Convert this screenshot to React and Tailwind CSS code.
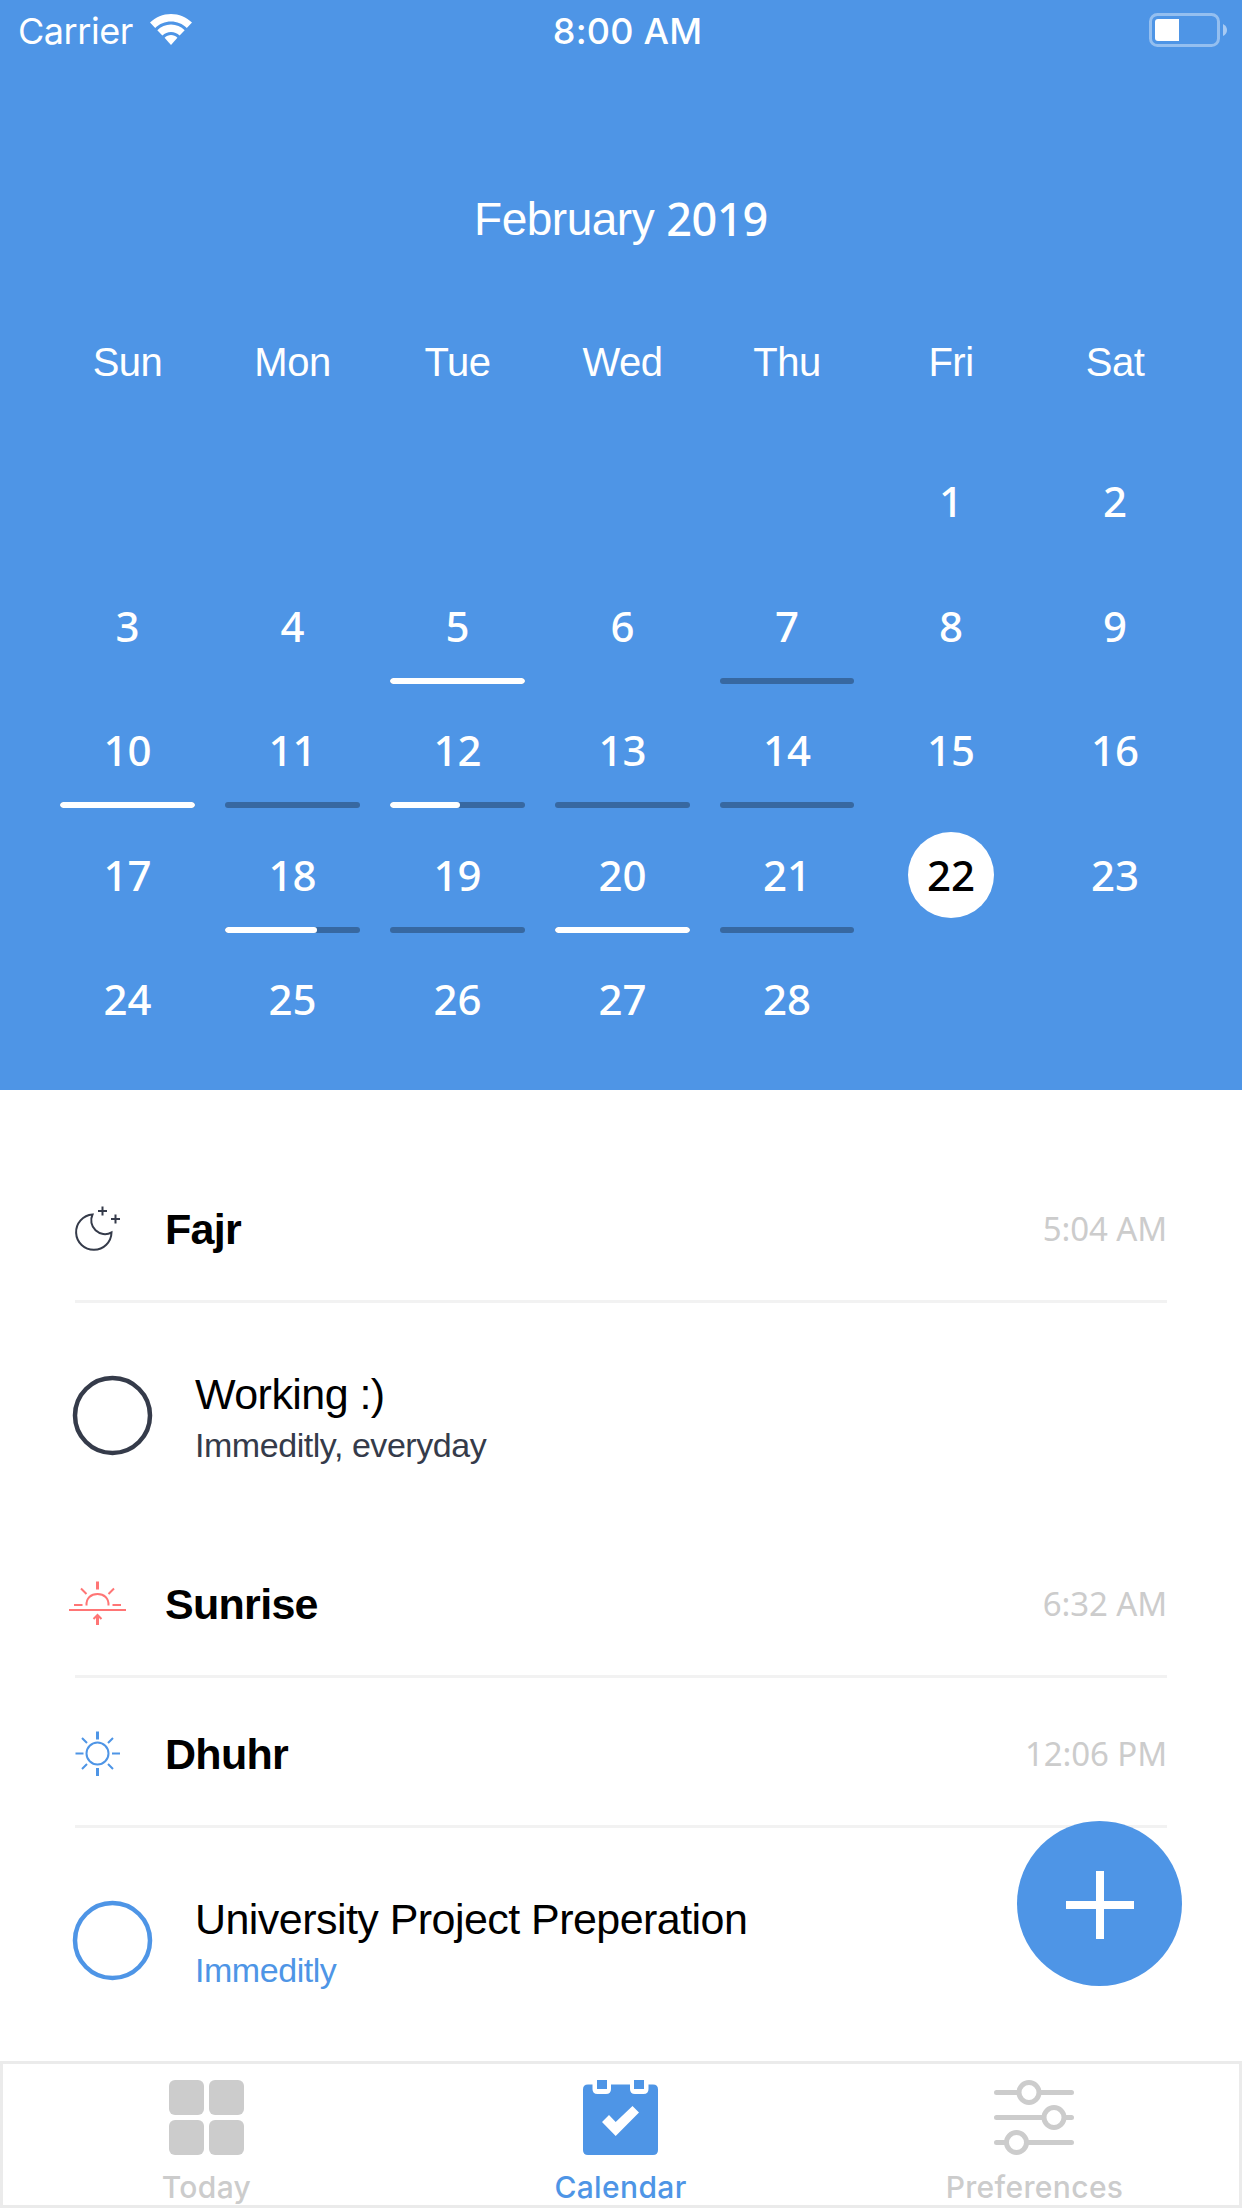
const sans = "font-['Liberation_Sans',Arial,sans-serif]";
const noto = "font-['Noto_Sans','Open_Sans',sans-serif]";
const inter = "font-['Inter',sans-serif]";

const weekdays = ["Sun", "Mon", "Tue", "Wed", "Thu", "Fri", "Sat"];
const progress = { 5: 100, 7: 0, 10: 100, 11: 0, 12: 52, 13: 0, 14: 0, 18: 68, 19: 0, 20: 100, 21: 0 };
const selectedDay = 22;
const cells = Array.from({ length: 35 }, (_, i) => (i >= 5 && i - 4 <= 28 ? i - 4 : null));

function StatusBar() {
  return (
    <div className={`flex h-[60px] items-center justify-between pl-[18px] pr-[14px] text-4xl leading-none ${inter}`}>
      <div className="flex w-[240px] items-center gap-[17px] pt-[2px]">
        <span className="tracking-[-0.45px]">Carrier</span>
        <svg className="-mt-[3px]" width="42" height="31" viewBox="0 0 42 31" fill="#fff">
          <path d="M21 0C13 0 5.500 3.100 0 8.600L5.200 13.900C9.400 9.700 15 7.400 21 7.400S32.600 9.700 36.800 13.900L42 8.600C36.500 3.100 29 0 21 0Z" />
          <path d="M21 10.500C15.800 10.500 10.900 12.600 7.300 16.200L12.400 21.400C14.700 19.100 17.700 17.900 21 17.900S27.300 19.100 29.600 21.400L34.700 16.200C31.100 12.600 26.200 10.500 21 10.500Z" />
          <path d="M21 21C18.600 21 16.300 22 14.600 23.700L21 31L27.400 23.700C25.700 22 23.400 21 21 21Z" />
        </svg>
      </div>
      <span className="pt-[2px] font-medium tracking-[0.2px]">8:00 AM</span>
      <div className="flex w-[231px] justify-end">
        <svg width="79" height="34" viewBox="0 0 79 34">
          <rect x="1.500" y="1.500" width="68" height="31" rx="7" fill="none" stroke="#fff" strokeOpacity=".4" strokeWidth="3" />
          <path d="M9 6H30V28H9Q6 28 6 25V9Q6 6 9 6Z" fill="#fff" />
          <path d="M74 11Q78 13 78 17T74 23Z" fill="#fff" fillOpacity=".5" />
        </svg>
      </div>
    </div>
  );
}

function DayCell({ day }) {
  if (!day) return <div />;
  const value = progress[day];
  return (
    <div className="flex flex-col items-center px-[15px]">
      <div
        className={
          day === selectedDay
            ? "flex h-[86px] w-[86px] items-center justify-center rounded-full bg-white text-black"
            : "flex h-[86px] w-[86px] items-center justify-center"
        }
      >
        {day}
      </div>
      {value !== undefined && (
        <div className="mt-[9px] h-[6px] w-full overflow-hidden rounded-full bg-[#3768a1]">
          <div className="h-full rounded-full bg-white" style={{ width: `${value}%` }} />
        </div>
      )}
    </div>
  );
}

function Calendar() {
  return (
    <div className="px-[45px]">
      <h1 className={`mt-[126px] flex h-[64px] items-center justify-center gap-[12px] text-[46px] leading-none ${sans}`}>
        <span className="pt-[2px] tracking-[-0.5px]">February</span>
        <span className={`text-[45px] font-medium tracking-[-0.3px] ${noto}`}>2019</span>
      </h1>
      <div className={`mt-[85px] grid h-[54px] grid-cols-[165px_165px_165px_165px_164px_164px_164px] items-center text-center text-[40px] leading-none tracking-[-0.5px] ${sans}`}>
        {weekdays.map((d) => (
          <span key={d}>{d}</span>
        ))}
      </div>
      <div className={`mt-[69px] grid auto-rows-[124.500px] grid-cols-[165px_165px_165px_165px_164px_164px_164px] text-[42px] font-medium leading-none ${noto}`}>
        {cells.map((d, i) => (
          <DayCell key={i} day={d} />
        ))}
      </div>
    </div>
  );
}

function MoonIcon() {
  return (
    <svg width="57" height="48" viewBox="0 0 57 48" fill="none" stroke="#353b4a" strokeWidth="2">
      <path d="M23.500 10.500A17.700 17.700 0 1 0 42.500 28.500A13.800 13.800 0 0 1 23.500 10.500Z" />
      <path d="M33.500 2.500v9M29 7h9M46.500 10.500v9M42 15h9" />
    </svg>
  );
}

function SunriseIcon() {
  return (
    <svg width="57" height="48" viewBox="0 0 57 48" fill="none" stroke="#ff7575" strokeWidth="2">
      <path d="M0 31H57" />
      <path d="M17.500 26.500C17 19 22 15 28.500 15S40 19 39.500 26.500M5 26h8.500M43.500 26H52M12 9.500l5.500 5.500M45 9.500L39.500 15M24.500 40l4-4 4 4" />
      <path d="M28.500 2.500v8M28.500 36.500v9.500" strokeWidth="3" />
    </svg>
  );
}

function SunIcon() {
  return (
    <svg width="57" height="48" viewBox="0 0 57 48" fill="none" stroke="#4e95e6" strokeWidth="2">
      <circle cx="28.500" cy="24.500" r="11" />
      <path d="M6.500 24.500h8M43 24.500h8M13 9l5 5M44 9l-5 5M13 40l5-5M44 40l-5-5" />
      <path d="M28.500 2.500v8M28.500 39v8" strokeWidth="3" />
    </svg>
  );
}

function PrayerHeader({ icon, name, time }) {
  return (
    <div className="mx-[75px] flex h-[150px] items-center border-b-[3px] border-[#f2f2f2] pt-[5px]">
      <div className="-ml-[6px] -mt-[3px] h-[48px] w-[57px] shrink-0">{icon}</div>
      <h2 className={`ml-[39px] flex-1 text-[43px] font-bold leading-none tracking-[-0.7px] ${sans}`}>{name}</h2>
      <span className={`-mt-px text-[33px] leading-none tracking-[-0.1px] text-[#ccc] ${noto}`}>{time}</span>
    </div>
  );
}

function Task({ title, note, color }) {
  return (
    <div className={`flex h-[225px] items-center pl-[72px] ${sans}`}>
      <svg className={`-mt-px shrink-0 ${color}`} width="81" height="81" viewBox="0 0 81 81" fill="none" stroke="currentColor" strokeWidth="4.500">
        <circle cx="40.500" cy="40.500" r="37.500" />
      </svg>
      <div className="ml-[42px] pt-[5px]">
        <div className="text-[43px] leading-[54px] tracking-[-0.55px]">{title}</div>
        <div className={`text-[34px] leading-[48px] tracking-[-0.45px] ${color}`}>{note}</div>
      </div>
    </div>
  );
}

function TodayIcon() {
  return (
    <div className="grid h-[75px] w-[75px] grid-cols-2 gap-[5px]">
      <span className="rounded-md bg-[#ccc]" />
      <span className="rounded-md bg-[#ccc]" />
      <span className="rounded-md bg-[#ccc]" />
      <span className="rounded-md bg-[#ccc]" />
    </div>
  );
}

function CalendarIcon() {
  return (
    <svg width="75" height="75" viewBox="0 0 75 75" fill="#4e95e6">
      <path d="M5 4.500H9.500V9Q9.500 14 14.500 14H23Q28 14 28 9V4.500H47V9Q47 14 52 14H60.500Q65.500 14 65.500 9V4.500H70Q75 4.500 75 9.500V70Q75 75 70 75H5Q0 75 0 70V9.500Q0 4.500 5 4.500Z" />
      <path d="M14 0h10v9H14zM51 0h10v9H51z" />
      <path d="M19 42L26 35L32.700 42L49.500 26L56 32.500L32.700 56Z" fill="#fff" />
    </svg>
  );
}

function PreferencesIcon() {
  return (
    <svg className="-ml-px" width="80" height="75" viewBox="0 0 80 75" fill="#fff" stroke="#ccc" strokeWidth="5" strokeLinecap="round">
      <path d="M2.500 12.500h75M2.500 37.500h75M2.500 62.500h75" />
      <circle cx="35" cy="12.500" r="10" />
      <circle cx="60" cy="37.500" r="10" />
      <circle cx="22.500" cy="62.500" r="10" />
    </svg>
  );
}

function Tab({ icon, label, color }) {
  return (
    <div className={`flex w-[414px] shrink-0 flex-col items-center pt-[16px] pr-px text-[30px] font-medium leading-none ${inter} ${color}`}>
      {icon}
      <span className="mt-[17px] tracking-[0.35px]">{label}</span>
    </div>
  );
}

export default function App() {
  return (
    <div className="relative h-[2208px] w-[1242px] overflow-hidden bg-white text-black">
      <header className="h-[1090px] bg-[#4e95e6] text-white">
        <StatusBar />
        <Calendar />
      </header>
      <main className="h-[971px] pt-[63px]">
        <PrayerHeader icon={<MoonIcon />} name="Fajr" time="5:04 AM" />
        <Task title="Working :)" note="Immeditly, everyday" color="text-[#353b4a]" />
        <PrayerHeader icon={<SunriseIcon />} name="Sunrise" time="6:32 AM" />
        <PrayerHeader icon={<SunIcon />} name="Dhuhr" time="12:06 PM" />
        <Task title="University Project Preperation" note="Immeditly" color="text-[#4e95e6]" />
      </main>
      <nav className="flex h-[147px] justify-center border-[3px] border-[#ebebeb] bg-white">
        <Tab icon={<TodayIcon />} label="Today" color="text-[#ccc]" />
        <Tab icon={<CalendarIcon />} label="Calendar" color="text-[#4e95e6]" />
        <Tab icon={<PreferencesIcon />} label="Preferences" color="text-[#ccc]" />
      </nav>
      <button className="absolute right-[60px] top-[1821px] flex h-[165px] w-[165px] items-center justify-center rounded-full bg-[#4e95e6] pl-px pt-[3px]">
        <svg width="68" height="68" viewBox="0 0 68 68" stroke="#fff" strokeWidth="8">
          <path d="M34 0V68M0 34H68" />
        </svg>
      </button>
    </div>
  );
}
